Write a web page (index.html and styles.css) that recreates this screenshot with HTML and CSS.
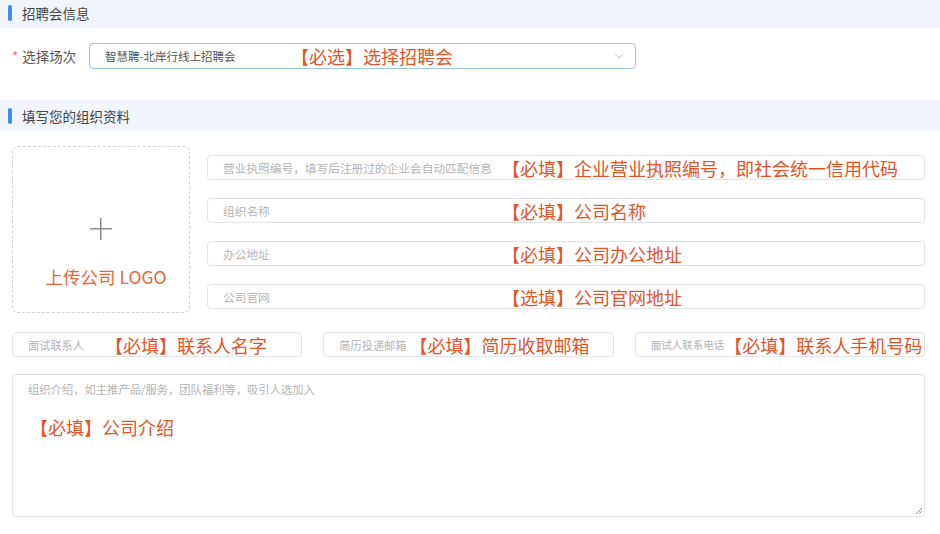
FILE: index.html
```html
<!DOCTYPE html>
<html lang="zh-CN">
    <head>
        <meta charset="utf-8">
        <title>填写组织资料</title>
        <link rel="stylesheet" href="styles.css">
    </head>
    <body>

        <div class='sectionTitle first'>
            <span class='titleBar'></span>
            <span class='titleText'>招聘会信息</span>
        </div>

        <div class='fairRow'>
            <div class='fairLabel'><span class='star'>*</span>选择场次</div>
            <div class='selectBox'>
                <span class='selectValue'>智慧聘-北岸行线上招聘会</span>
                <span class='note'>【必选】选择招聘会</span>
                <svg class='chevron' width='10' height='6' viewBox='0 0 10 6'>
                    <path d='M1 1 L5 5 L9 1' fill='none' stroke='#c6cad2' stroke-width='1'/>
                </svg>
            </div>
        </div>

        <div class='sectionTitle'>
            <span class='titleBar'></span>
            <span class='titleText'>填写您的组织资料</span>
        </div>

        <div class='orgForm'>

            <div class='topPart'>
                <div class='uploadBox'>
                    <div class='plus'></div>
                    <div class='uploadText'>上传公司 LOGO</div>
                </div>

                <div class='rightFields'>
                    <div class='field'>
                        <span class='hint wideHint'>营业执照编号，填写后注册过的企业会自动匹配信息</span>
                        <span class='note'>【必填】企业营业执照编号，即社会统一信用代码</span>
                    </div>
                    <div class='field'>
                        <span class='hint wideHint'>组织名称</span>
                        <span class='note'>【必填】公司名称</span>
                    </div>
                    <div class='field'>
                        <span class='hint wideHint'>办公地址</span>
                        <span class='note'>【必填】公司办公地址</span>
                    </div>
                    <div class='field'>
                        <span class='hint wideHint'>公司官网</span>
                        <span class='note'>【选填】公司官网地址</span>
                    </div>
                </div>
            </div>

            <div class='contactRow'>
                <div class='field'>
                    <span class='hint'>面试联系人</span>
                    <span class='note spaced'>【必填】联系人名字</span>
                </div>
                <div class='field'>
                    <span class='hint'>简历投递邮箱</span>
                    <span class='note'>【必填】简历收取邮箱</span>
                </div>
                <div class='field tight'>
                    <span class='hint'>面试人联系电话</span>
                    <span class='note'>【必填】联系人手机号码</span>
                </div>
            </div>

            <div class='introBox'>
                <div class='hint'>组织介绍，如主推产品/服务，团队福利等，吸引人选加入</div>
                <div class='note introNote'>【必填】公司介绍</div>
                <svg class='resizer' width='9' height='9' viewBox='0 0 9 9'>
                    <path d='M8 2 L2 8 M8 5 L5 8' fill='none' stroke='#999' stroke-width='1'/>
                </svg>
            </div>

        </div>

    </body>
</html>
```

FILE: styles.css
```css
body
    {
        margin:           0;
        background-color: #fff;
        font-family:      "Noto Sans CJK SC", "Noto Sans", sans-serif;
        color:            #333;
    }

.sectionTitle
    {
        display:          flex;
        align-items:      center;
        height:           31px;
        padding-left:     8px;
        background-color: #f2f5fb;
    }

.sectionTitle.first
    {
        height:           26px;
        padding-bottom:   2px;
    }

.titleBar
    {
        width:            4px;
        height:           16px;
        border-radius:    2px;
        background-color: #3d8ef0;
        margin-right:     10px;
    }

.titleText
    {
        font-size:        13.5px;
        color:            #444;
    }

.fairRow
    {
        display:          flex;
        align-items:      center;
        padding:          15px 0 31px 12px;
    }

.fairLabel
    {
        width:            77px;
        font-size:        13.5px;
        color:            #555;
    }

.star
    {
        color:            #f56c6c;
        margin-right:     4px;
    }

.selectBox
    {
        display:          flex;
        align-items:      center;
        width:            530px;
        height:           24px;
        padding-left:     15px;
        border:           1px solid #9fc3e6;
        border-radius:    4px;
    }

.selectValue
    {
        width:            186px;
        font-size:        11.5px;
        color:            #555;
    }

.chevron
    {
        margin-left:      auto;
        margin-right:     11px;
    }

.note
    {
        font-size:        18px;
        color:            #e0562a;
        white-space:      nowrap;
        line-height:      20px;
    }

.hint
    {
        font-size:        11.7px;
        color:            #b4b4b4;
        white-space:      nowrap;
    }

.orgForm
    {
        padding:          15px 15px 0 12px;
    }

.topPart
    {
        display:          flex;
        gap:              17px;
    }

.uploadBox
    {
        box-sizing:       border-box;
        width:            178px;
        height:           167px;
        border:           1px dashed #d2d2d2;
        border-radius:    6px;
        display:          flex;
        flex-direction:   column;
        align-items:      center;
        padding-top:      71px;
    }

.plus
    {
        width:            22px;
        height:           22px;
        background:
            linear-gradient(#8a8a8a, #8a8a8a) center / 22px 1.5px no-repeat,
            linear-gradient(#8a8a8a, #8a8a8a) center / 1.5px 22px no-repeat;
        margin-bottom:    27px;
    }

.uploadText
    {
        font-size:        17.5px;
        color:            #e0683a;
        line-height:      20px;
        margin-left:      10px;
    }

.rightFields
    {
        flex:             1;
        display:          flex;
        flex-direction:   column;
        gap:              18px;
        padding-top:      9px;
    }

.field
    {
        box-sizing:       border-box;
        display:          flex;
        align-items:      center;
        height:           25px;
        padding-left:     15px;
        border:           1px solid #e1e3e8;
        border-radius:    4px;
        gap:              3px;
        overflow:         hidden;
    }

.wideHint
    {
        width:            276px;
    }

.note.spaced
    {
        margin-left:      18px;
    }

.contactRow
    {
        display:          grid;
        grid-template-columns: 1fr 1fr 1fr;
        column-gap:       21px;
        margin-top:       19px;
    }

.contactRow .hint
    {
        font-size:        11.2px;
    }

.field.tight
    {
        padding-left:     15px;
        gap:              0;
    }

.field.tight .hint
    {
        font-size:        10.5px;
    }

.introBox
    {
        position:         relative;
        box-sizing:       border-box;
        height:           143px;
        margin-top:       17px;
        padding:          6px 15px;
        border:           1px solid #e1e3e8;
        border-radius:    4px;
    }

.introBox .hint
    {
        font-size:        11.3px;
    }

.introNote
    {
        margin-top:       20px;
        padding-left:     2px;
    }

.resizer
    {
        position:         absolute;
        right:            1px;
        bottom:           1px;
    }
```
